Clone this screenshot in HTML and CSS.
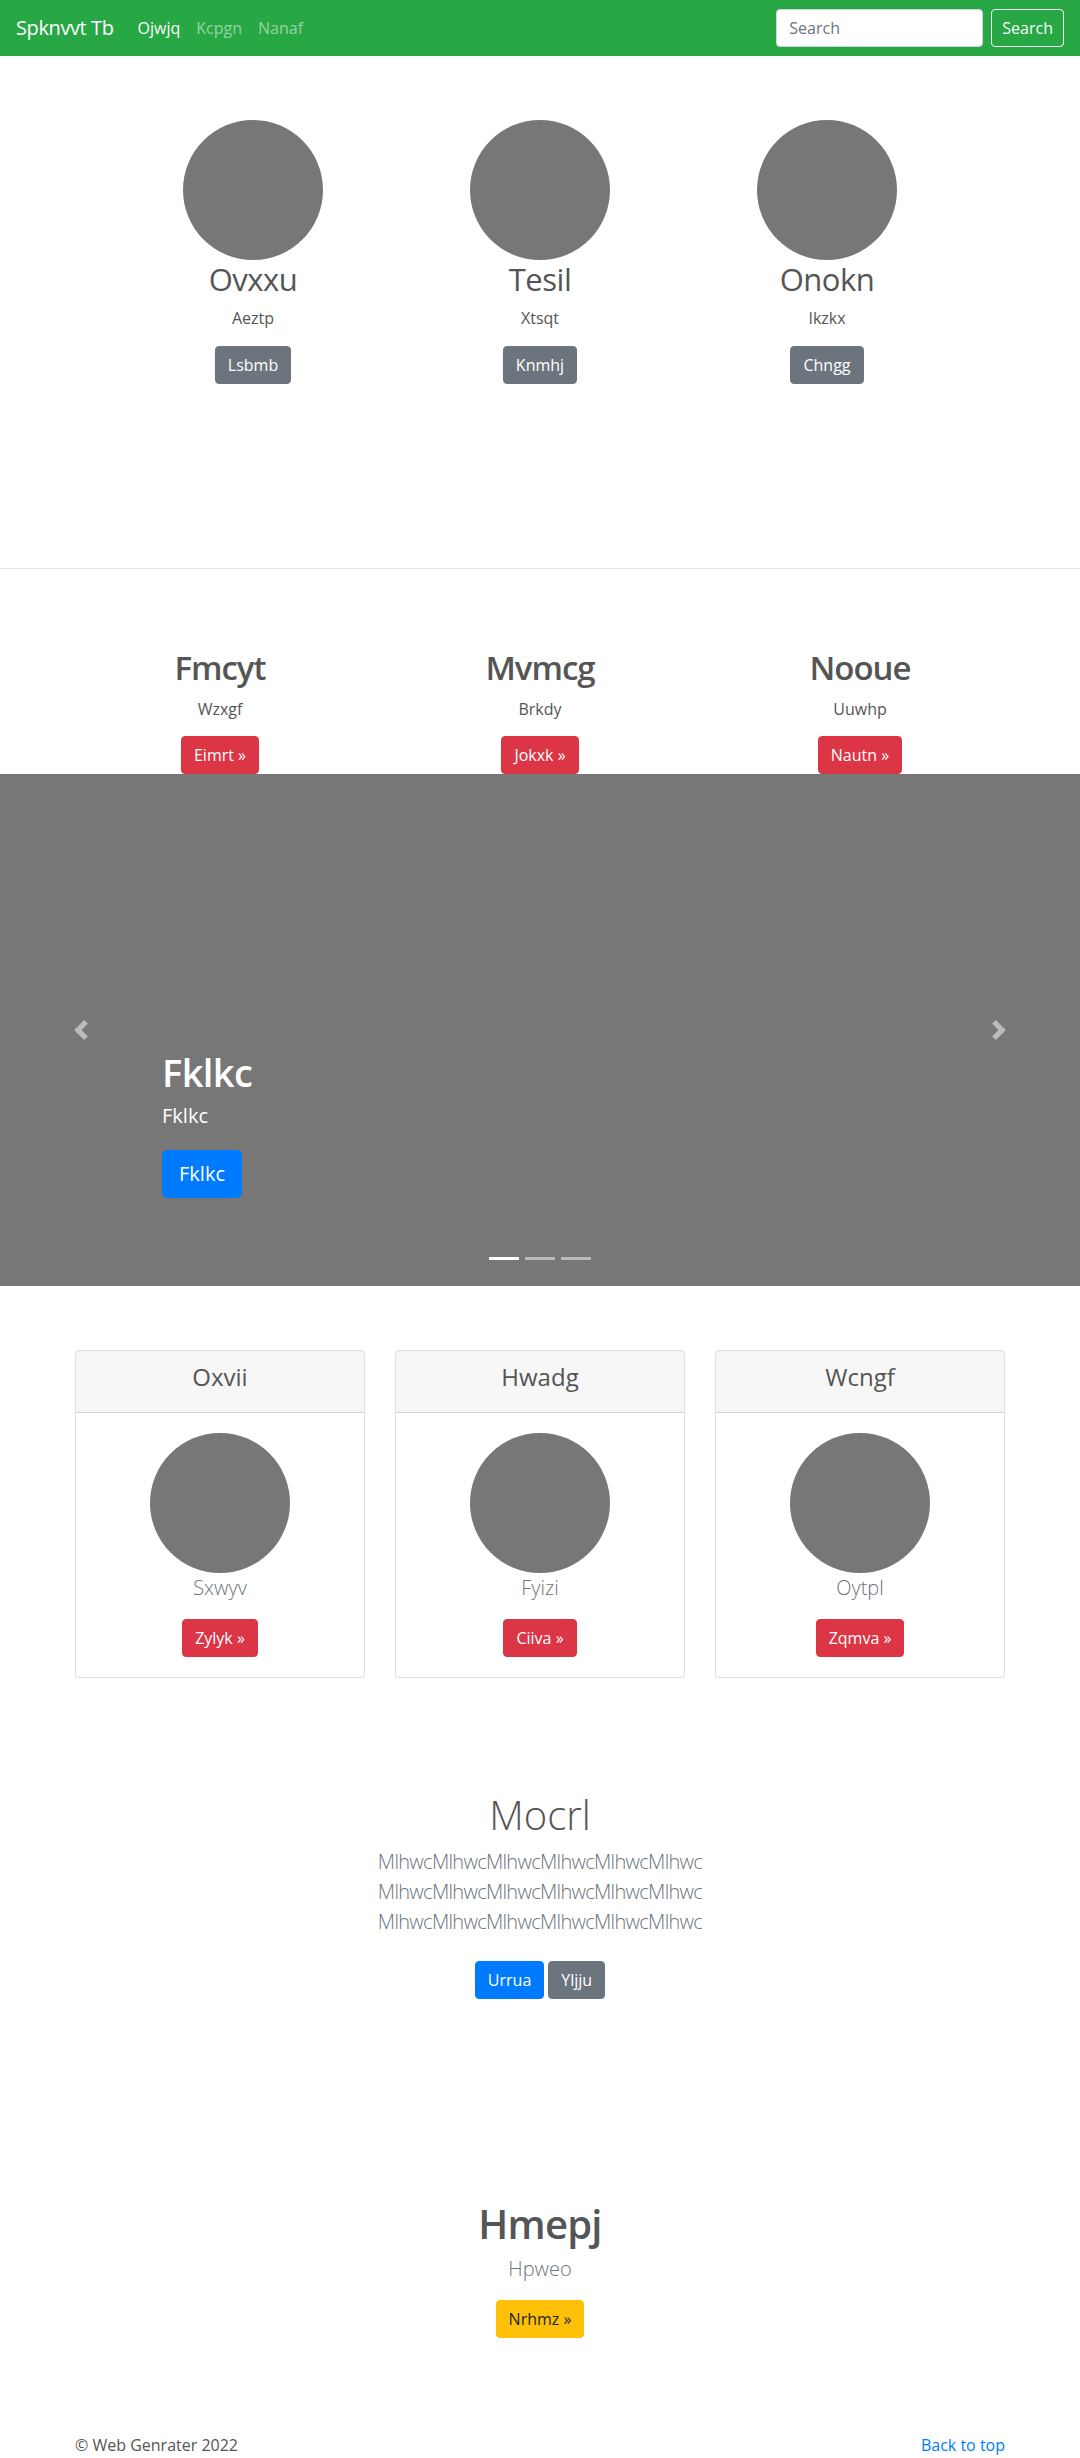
FILE: index.html
```html
<!DOCTYPE html>
<html lang="en">
<head>
<meta charset="utf-8">
<title>Spknvvt Tb</title>
<link rel="stylesheet" href="styles.css">
</head>
<body>
<nav class="navbar">
  <a class="brand" href="#">Spknvvt Tb</a>
  <ul class="nav-links">
    <li><a class="nav-link active" href="#">Ojwjq</a></li>
    <li><a class="nav-link" href="#">Kcpgn</a></li>
    <li><a class="nav-link" href="#">Nanaf</a></li>
  </ul>
  <form class="search-form">
    <input class="search-input" type="text" placeholder="Search">
    <button class="btn btn-outline-light" type="button">Search</button>
  </form>
</nav>

<section class="profiles">
  <div class="profile-grid">
    <div class="profile">
      <div class="avatar"></div>
      <h2 class="profile-name">Ovxxu</h2>
      <p class="profile-text">Aeztp</p>
      <a class="btn btn-secondary" href="#">Lsbmb</a>
    </div>
    <div class="profile">
      <div class="avatar"></div>
      <h2 class="profile-name">Tesil</h2>
      <p class="profile-text">Xtsqt</p>
      <a class="btn btn-secondary" href="#">Knmhj</a>
    </div>
    <div class="profile">
      <div class="avatar"></div>
      <h2 class="profile-name">Onokn</h2>
      <p class="profile-text">Ikzkx</p>
      <a class="btn btn-secondary" href="#">Chngg</a>
    </div>
  </div>
</section>

<hr class="divider">

<section class="features">
  <div class="feature-grid">
    <div class="feature">
      <h2 class="feature-title">Fmcyt</h2>
      <p class="feature-text">Wzxgf</p>
      <a class="btn btn-danger" href="#">Eimrt »</a>
    </div>
    <div class="feature">
      <h2 class="feature-title">Mvmcg</h2>
      <p class="feature-text">Brkdy</p>
      <a class="btn btn-danger" href="#">Jokxk »</a>
    </div>
    <div class="feature">
      <h2 class="feature-title">Nooue</h2>
      <p class="feature-text">Uuwhp</p>
      <a class="btn btn-danger" href="#">Nautn »</a>
    </div>
  </div>
</section>

<section class="carousel">
  <ol class="indicators">
    <li class="indicator active"></li>
    <li class="indicator"></li>
    <li class="indicator"></li>
  </ol>
  <div class="caption">
    <h1 class="caption-title">Fklkc</h1>
    <p class="caption-text">Fklkc</p>
    <div class="caption-actions"><a class="btn btn-primary btn-lg" href="#">Fklkc</a></div>
  </div>
  <a class="control control-prev" href="#">
    <svg class="control-icon" viewBox="0 0 8 8" width="20" height="20"><path d="M5.25 0l-4 4 4 4 1.5-1.5L4.25 4l2.5-2.5L5.25 0z"/></svg>
  </a>
  <a class="control control-next" href="#">
    <svg class="control-icon" viewBox="0 0 8 8" width="20" height="20"><path d="M2.75 0l-1.5 1.5L3.75 4l-2.5 2.5L2.75 8l4-4-4-4z"/></svg>
  </a>
</section>

<section class="cards">
  <div class="card">
    <div class="card-header"><h4 class="card-title">Oxvii</h4></div>
    <div class="card-body">
      <div class="avatar"></div>
      <p class="lead muted">Sxwyv</p>
      <a class="btn btn-danger" href="#">Zylyk »</a>
    </div>
  </div>
  <div class="card">
    <div class="card-header"><h4 class="card-title">Hwadg</h4></div>
    <div class="card-body">
      <div class="avatar"></div>
      <p class="lead muted">Fyizi</p>
      <a class="btn btn-danger" href="#">Ciiva »</a>
    </div>
  </div>
  <div class="card">
    <div class="card-header"><h4 class="card-title">Wcngf</h4></div>
    <div class="card-body">
      <div class="avatar"></div>
      <p class="lead muted">Oytpl</p>
      <a class="btn btn-danger" href="#">Zqmva »</a>
    </div>
  </div>
</section>

<section class="jumbo">
  <h1 class="jumbo-title">Mocrl</h1>
  <p class="lead muted jumbo-text">MlhwcMlhwcMlhwcMlhwcMlhwcMlhwc<br>MlhwcMlhwcMlhwcMlhwcMlhwcMlhwc<br>MlhwcMlhwcMlhwcMlhwcMlhwcMlhwc</p>
  <div class="jumbo-actions">
    <a class="btn btn-primary" href="#">Urrua</a>
    <a class="btn btn-secondary" href="#">Yljju</a>
  </div>
</section>

<section class="cta">
  <h1 class="cta-title">Hmepj</h1>
  <p class="lead muted cta-text">Hpweo</p>
  <a class="btn btn-warning" href="#">Nrhmz »</a>
</section>

<footer class="footer">
  <p class="copyright">© Web Genrater 2022</p>
  <a class="back-top" href="#">Back to top</a>
</footer>
</body>
</html>
```

FILE: styles.css
```css
* { box-sizing: border-box; }

html, body {
  margin: 0;
  padding: 0;
}

body {
  font-family: "Open Sans", "Noto Sans", "Liberation Sans", sans-serif;
  font-size: 16px;
  line-height: 1.5;
  color: #555;
  background: #fff;
}

a { text-decoration: none; }

/* Navbar */
.navbar {
  display: flex;
  align-items: center;
  height: 56px;
  padding: 0 16px;
  background: #28a745;
}
.brand {
  color: #fff;
  font-size: 20px;
  line-height: 30px;
  letter-spacing: -0.4px;
  margin-right: 16px;
}
.nav-links {
  display: flex;
  list-style: none;
  margin: 0;
  padding: 0;
  flex: 1;
}
.nav-link {
  display: block;
  padding: 8px;
  color: rgba(255, 255, 255, 0.5);
}
.nav-link.active { color: #fff; }

.search-form {
  display: flex;
  align-items: center;
  gap: 8px;
}
.search-input {
  width: 207px;
  height: 38px;
  padding: 6px 12px;
  font: inherit;
  font-size: 16px;
  color: #495057;
  border: 1px solid #ced4da;
  border-radius: 4px;
  background: #fff;
}
.search-input::placeholder { color: #6c757d; }

/* Buttons */
.btn {
  display: inline-block;
  padding: 6px 12px;
  font-size: 16px;
  line-height: 24px;
  border: 1px solid transparent;
  border-radius: 4px;
  color: #fff;
  font-family: inherit;
  background: transparent;
}
.btn-outline-light { color: #f8f9fa; border-color: #f8f9fa; padding: 6px 10px; }
.btn-secondary { background: #6c757d; border-color: #6c757d; }
.btn-danger { background: #dc3545; border-color: #dc3545; }
.btn-primary { background: #007bff; border-color: #007bff; }
.btn-warning { background: #ffc107; border-color: #ffc107; color: #212529; }
.btn-lg { padding: 8px 16px; font-size: 20px; line-height: 30px; border-radius: 5px; }

.avatar {
  width: 140px;
  height: 140px;
  border-radius: 50%;
  background: #777;
  margin: 0 auto;
}

/* Profiles */
.profiles { padding: 64px 0 184px; }
.profile-grid {
  width: 861px;
  margin: 0 auto;
  display: grid;
  grid-template-columns: repeat(3, 1fr);
}
.profile { text-align: center; }
.profile-name {
  margin: 0 0 8px;
  font-size: 31px;
  font-weight: 400;
  letter-spacing: -0.5px;
  line-height: 38px;
}
.profile-text { margin: 0 0 16px; }

.divider {
  margin: 0;
  border: 0;
  border-top: 1px solid #e5e5e5;
}

/* Features */
.features { padding-top: 78px; height: 205px; }
.feature-grid {
  width: 960px;
  margin: 0 auto;
  display: grid;
  grid-template-columns: repeat(3, 1fr);
}
.feature { text-align: center; }
.feature-title {
  margin: 0 0 8px;
  font-size: 33px;
  font-weight: 600;
  letter-spacing: -1px;
  line-height: 42px;
}
.feature-text { margin: 0 0 15px; }
.feature .btn { vertical-align: top; }

/* Carousel */
.carousel {
  position: relative;
  height: 512px;
  background: #777;
  overflow: hidden;
}
.caption {
  position: absolute;
  left: 15%;
  right: 15%;
  bottom: 52px;
  padding: 20px 0;
  color: #fff;
  text-align: left;
}
.caption-title {
  margin: 0 0 5px;
  font-size: 38px;
  font-weight: 600;
  letter-spacing: -0.6px;
  line-height: 48px;
}
.caption-text {
  margin: 0 0 19px;
  font-size: 20px;
  line-height: 30px;
}
.caption-actions { display: flex; margin-bottom: 16px; }
.control {
  position: absolute;
  top: 0;
  bottom: 0;
  width: 15%;
  display: flex;
  align-items: center;
  justify-content: center;
  opacity: 0.5;
}
.control-prev { left: 0; }
.control-next { right: 0; }
.control-icon { fill: #fff; display: block; }
.indicators {
  position: absolute;
  left: 0;
  right: 0;
  bottom: 26px;
  margin: 0;
  padding: 0;
  list-style: none;
  display: flex;
  justify-content: center;
}
.indicator {
  width: 30px;
  height: 3px;
  margin: 0 3px;
  background: #fff;
  opacity: 0.5;
}
.indicator.active { opacity: 1; }

/* Cards */
.cards {
  width: 930px;
  margin: 64px auto 0;
  display: grid;
  grid-template-columns: repeat(3, 1fr);
  gap: 30px;
}
.card {
  border: 1px solid rgba(0, 0, 0, 0.125);
  border-radius: 4px;
  text-align: center;
}
.card-header {
  padding: 12px 20px;
  background: rgba(0, 0, 0, 0.03);
  border-bottom: 1px solid rgba(0, 0, 0, 0.125);
}
.card-title {
  margin: 0 0 8px;
  font-size: 24px;
  font-weight: 500;
  line-height: 1.2;
}
.card-body { padding: 20px; }
.card-body .lead { margin: 0 0 16px; }
.card-body .btn { vertical-align: top; }

.lead {
  font-size: 20px;
  font-weight: 300;
  line-height: 30px;
}
.muted { color: #6c757d; }

/* Jumbotron */
.jumbo {
  padding-top: 113px;
  text-align: center;
}
.jumbo-title {
  margin: 0 0 8px;
  font-size: 40px;
  font-weight: 300;
  line-height: 48px;
}
.jumbo-text {
  margin: 0;
  letter-spacing: -0.7px;
}
.jumbo-actions {
  display: flex;
  justify-content: center;
  gap: 4px;
  margin: 24px 0 8px;
}

/* CTA */
.cta {
  padding-top: 192px;
  text-align: center;
}
.cta-title {
  margin: 0 0 5px;
  font-size: 40px;
  font-weight: 600;
  letter-spacing: -0.8px;
  line-height: 50px;
}
.cta-text { margin: 0 0 16px; }
.cta .btn { vertical-align: top; }

/* Footer */
.footer {
  width: 930px;
  margin: 95px auto 0;
  display: flex;
  justify-content: space-between;
  padding-bottom: 48px;
}
.copyright { margin: 0; }
.back-top { color: #007bff; }
```
